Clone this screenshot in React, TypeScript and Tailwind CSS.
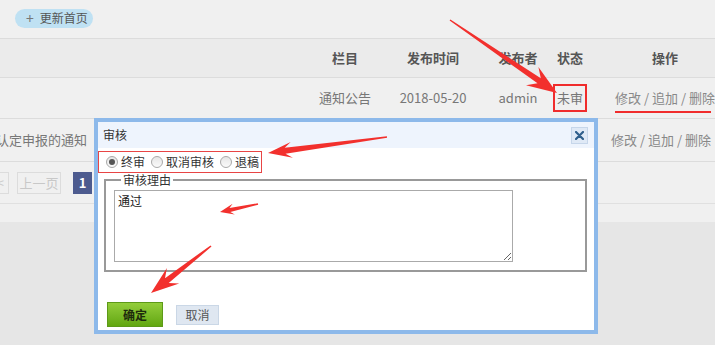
import React from "react";

type P = [number, number];

function arrowPoints(tail: P, tip: P, hl: number, hw: number, w0: number, w1: number) {
  const dx = tip[0] - tail[0];
  const dy = tip[1] - tail[1];
  const L = Math.hypot(dx, dy);
  const ux = dx / L;
  const uy = dy / L;
  const px = -uy;
  const py = ux;
  const neck: P = [tip[0] - ux * hl * 0.72, tip[1] - uy * hl * 0.72];
  const base: P = [tip[0] - ux * hl, tip[1] - uy * hl];
  const pts: P[] = [
    [tail[0] + (px * w0) / 2, tail[1] + (py * w0) / 2],
    [neck[0] + (px * w1) / 2, neck[1] + (py * w1) / 2],
    [base[0] + (px * hw) / 2, base[1] + (py * hw) / 2],
    tip,
    [base[0] - (px * hw) / 2, base[1] - (py * hw) / 2],
    [neck[0] - (px * w1) / 2, neck[1] - (py * w1) / 2],
    [tail[0] - (px * w0) / 2, tail[1] - (py * w0) / 2],
  ];
  return pts.map((p) => `${p[0].toFixed(1)},${p[1].toFixed(1)}`).join(" ");
}

const arrows: { tail: P; tip: P; hl: number; hw: number; w0: number; w1: number }[] = [
  { tail: [450, 20], tip: [557, 93], hl: 30, hw: 22, w0: 1.5, w1: 6 },
  { tail: [387, 137], tip: [268, 153], hl: 24, hw: 16, w0: 1.5, w1: 6 },
  { tail: [258, 204], tip: [220, 212], hl: 14, hw: 11, w0: 1.5, w1: 4 },
  { tail: [211, 246], tip: [151, 293], hl: 28, hw: 20, w0: 1.5, w1: 6 },
];

function Radio({ checked, label }: { checked?: boolean; label: string }) {
  return (
    <span className="flex items-center gap-[3px] whitespace-nowrap shrink-0">
      <span className="w-[12px] h-[12px] shrink-0 rounded-full border border-[#a9a9a9] bg-gradient-to-b from-[#e6e6e6] to-[#fafafa] flex items-center justify-center">
        {checked && <span className="w-[6px] h-[6px] rounded-full bg-[#555]" />}
      </span>
      <span>{label}</span>
    </span>
  );
}

export default function App() {
  const font = { fontFamily: '"Microsoft YaHei", "Noto Sans CJK SC", "Noto Sans", sans-serif' };
  return (
    <div
      className="relative w-[715px] h-[345px] overflow-hidden bg-[#e6e6e6] text-[#666]"
      style={font}
    >
      <div className="bg-[#f0f0f0]">
        {/* toolbar */}
        <div className="h-[38px] pt-[5px] pl-[15px]">
          <div className="inline-flex items-center h-[19px] w-[78px] rounded-full bg-[#bfe1f3] pl-[11px] gap-[6px] text-[12px] text-[#555]">
            <span className="text-[14px] leading-none text-[#777]">+</span>
            <span>更新首页</span>
          </div>
        </div>
        {/* table header */}
        <div className="flex w-[740px] h-[40px] items-center bg-[#ebebeb] border-y border-[#dcdcdc] text-[13px] font-bold text-[#555]">
          <div className="w-[310px]" />
          <div className="w-[70px] text-center">栏目</div>
          <div className="w-[106px] text-center">发布时间</div>
          <div className="w-[64px] text-center">发布者</div>
          <div className="w-[40px] text-center">状态</div>
          <div className="w-[150px] text-center">操作</div>
        </div>
        {/* row 1 */}
        <div className="flex w-[740px] h-[41px] items-center border-b border-[#dcdcdc] text-[13px] text-[#777]">
          <div className="w-[310px]" />
          <div className="w-[70px] text-center">通知公告</div>
          <div className="w-[106px] text-center">2018-05-20</div>
          <div className="w-[64px] text-center">admin</div>
          <div className="w-[40px] flex justify-center">
            <span className="border-2 border-[#f02c2c] px-[2px] py-[3px] leading-[18px]">未审</span>
          </div>
          <div className="w-[150px] flex justify-center">
            <span className="relative text-[#888]">
              修改 / 追加 / 删除
              <span className="absolute left-0 right-[4px] top-[23px] h-[2px] bg-[#f02c2c]" />
            </span>
          </div>
        </div>
        {/* row 2 */}
        <div className="flex w-[740px] h-[43px] items-center border-b border-[#dcdcdc] text-[13px] text-[#777]">
          <div className="w-[310px] -ml-[4px] whitespace-nowrap">认定申报的通知</div>
          <div className="w-[70px]" />
          <div className="w-[106px]" />
          <div className="w-[64px]" />
          <div className="w-[40px]" />
          <div className="w-[150px] flex justify-center text-[#888]">修改 / 追加 / 删除</div>
        </div>
        {/* pagination */}
        <div className="h-[42px] flex items-center gap-[8px] -ml-[14px] border-b border-[#e0e0e0] text-[13px]">
          <div className="h-[22px] w-[23px] border border-[#dcdcdc] flex items-center justify-end pr-[4px] text-[#ccc]">&lt;</div>
          <div className="h-[22px] w-[44px] border border-[#dcdcdc] flex items-center justify-center text-[#c8c8c8]">上一页</div>
          <div className="ml-[4px] h-[22px] w-[19px] bg-[#4d5b8f] flex items-center justify-center text-white font-bold">1</div>
        </div>
        <div className="h-[18px]" />
      </div>

      {/* modal dialog */}
      <div className="absolute left-[94px] top-[118px] w-[504px] h-[216px] border-4 border-[#8db9ea] bg-white flex flex-col text-[12px] text-[#333]">
        <div className="h-[26px] shrink-0 bg-[#eef4fd] flex items-center justify-between pl-[5px] pr-[6px]">
          <span>审核</span>
          <span className="w-[17px] h-[17px] bg-[#dfe9f6] border border-[#c6d6ea] flex items-center justify-center">
            <svg width="9" height="9" viewBox="0 0 9 9">
              <path d="M1 1 L8 8 M8 1 L1 8" stroke="#2f5f8c" strokeWidth="2.2" strokeLinecap="round" />
            </svg>
          </span>
        </div>
        <div className="mt-[3px] h-[22px] w-[164px] shrink-0 border border-[#e84545] flex items-center gap-[6px] pl-[7px]">
          <Radio checked label="终审" />
          <Radio label="取消审核" />
          <Radio label="退稿" />
        </div>
        <fieldset className="mt-[-1px] ml-[6px] w-[483px] h-[100px] shrink-0 border-2 border-[#999] px-[8px]">
          <legend className="ml-[7px] px-[2px] leading-[16px]">审核理由</legend>
          <textarea
            readOnly
            defaultValue="通过"
            className="mt-[2px] block w-[399px] h-[72px] border border-[#aaa] px-[3px] py-[1px] text-[12px] text-[#222] outline-none"
            style={font}
          />
        </fieldset>
        <div className="mt-auto mb-[3px] ml-[9px] flex items-end gap-[13px]">
          <button className="w-[56px] h-[25px] bg-gradient-to-b from-[#93cd3a] to-[#62a70e] border border-[#5d9a18] text-[#1d2a0d] font-bold text-[12px]">
            确定
          </button>
          <button className="mb-[2px] w-[43px] h-[20px] bg-[#dfe7f1] border border-[#cad7e6] text-[#555] text-[12px]">
            取消
          </button>
        </div>
      </div>

      {/* annotation arrows */}
      <svg className="absolute inset-0 pointer-events-none" width="715" height="345">
        {arrows.map((a, i) => (
          <polygon key={i} points={arrowPoints(a.tail, a.tip, a.hl, a.hw, a.w0, a.w1)} fill="#f2302d" />
        ))}
      </svg>
    </div>
  );
}
